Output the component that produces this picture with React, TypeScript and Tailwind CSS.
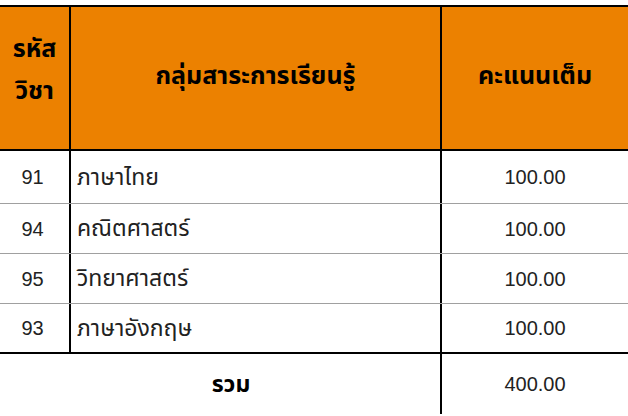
import React from "react";

const rows = [
  { code: "91", name: "ภาษาไทย", score: "100.00" },
  { code: "94", name: "คณิตศาสตร์", score: "100.00" },
  { code: "95", name: "วิทยาศาสตร์", score: "100.00" },
  { code: "93", name: "ภาษาอังกฤษ", score: "100.00" },
];

const font = {
  fontFamily: '"Liberation Sans", "Noto Sans Thai", "Tahoma", "Noto Sans", sans-serif',
};

export default function App() {
  return (
    <div className="w-[628px] h-[416px] bg-white overflow-hidden pt-[5px] text-[#222]" style={font}>
      {/* header */}
      <div className="flex h-[146px] border-t-2 border-b-2 border-black bg-[#ec8100] text-black font-bold">
        <div className="w-[71px] border-r-2 border-black flex flex-col items-center pt-[20px] text-[25px] leading-[42px]">
          <span>รหัส</span>
          <span>วิชา</span>
        </div>
        <div className="w-[371px] border-r-2 border-black flex items-center justify-center text-[25px] pb-[4px]">
          กลุ่มสาระการเรียนรู้
        </div>
        <div className="flex-1 flex items-center justify-center text-[25px] pb-[4px]">
          คะแนนเต็ม
        </div>
      </div>
      {/* body */}
      {rows.map((r, i) => (
        <div
          key={r.code}
          className={
            "flex text-[20px] " +
            (i === 0 ? "h-[53px] " : "h-[50px] ") +
            (i === rows.length - 1 ? "border-b-2 border-black" : "border-b border-[#a0a0a0]")
          }
        >
          <div className="w-[71px] border-r-2 border-black flex items-center justify-center pr-[4px]">
            {r.code}
          </div>
          <div className="w-[371px] border-r-2 border-black flex items-center pl-[6px] text-[23px]">{r.name}</div>
          <div className="flex-1 flex items-center justify-center">{r.score}</div>
        </div>
      ))}
      {/* footer */}
      <div className="flex h-[60px] text-[20px]">
        <div className="w-[442px] border-r-2 border-black flex items-center justify-center pl-[22px] font-bold text-black text-[23px]">
          รวม
        </div>
        <div className="flex-1 flex items-center justify-center">400.00</div>
      </div>
    </div>
  );
}
